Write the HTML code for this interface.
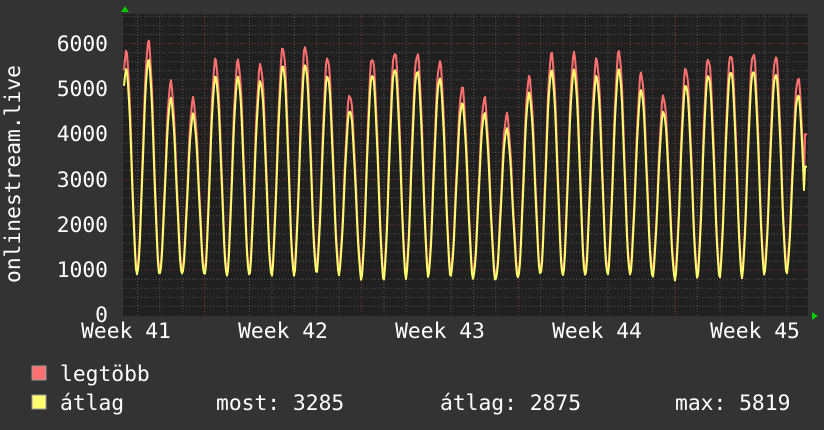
<!DOCTYPE html>
<html><head><meta charset="utf-8"><style>
html,body{margin:0;padding:0;background:#333;}
svg{display:block;}
text{font-family:"DejaVu Sans Mono","Liberation Mono",monospace;fill:#fff;font-size:21.3px;}
</style></head><body>
<svg id="s" width="824" height="430" xmlns="http://www.w3.org/2000/svg">
<rect width="824" height="430" fill="#333"/>
<rect x="123" y="14" width="685" height="302" fill="#202020"/>
<g id="grid"></g>
<path id="mx" fill="none" stroke="#ff7070" stroke-width="2" stroke-linejoin="round"/>
<path id="av" fill="none" stroke="#ffff70" stroke-width="2" stroke-linejoin="round"/>
<polygon points="121,12 125,6 129,12" fill="#0c0"/>
<polygon points="812,312 818,316 812,320" fill="#0c0"/>
<g text-anchor="end">
<text x="108" y="51">6000</text><text x="108" y="96">5000</text><text x="108" y="141">4000</text>
<text x="108" y="187">3000</text><text x="108" y="232">2000</text><text x="108" y="277">1000</text>
<text x="108" y="322">0</text></g>
<g text-anchor="middle">
<text x="126" y="338">Week 41</text><text x="283" y="338">Week 42</text><text x="440" y="338">Week 43</text>
<text x="597" y="338">Week 44</text><text x="755" y="338">Week 45</text></g>
<text transform="translate(20,174) rotate(-90)" text-anchor="middle">onlinestream.live</text>
<rect x="32" y="366" width="14" height="14" fill="#ff7070" stroke="#999" stroke-width="1"/>
<rect x="32" y="395" width="14" height="14" fill="#ffff70" stroke="#999" stroke-width="1"/>
<text x="60" y="381">legtöbb</text>
<text x="60" y="410">átlag</text>
<text x="216" y="410">most: 3285</text>
<text x="440" y="410">átlag: 2875</text>
<text x="675" y="410">max: 5819</text>
</svg>
<script>
var g=document.getElementById('grid'),h='';
function ln(x1,y1,x2,y2,c){h+='<line x1="'+x1+'" y1="'+y1+'" x2="'+x2+'" y2="'+y2+'" stroke="'+c+'" stroke-width="1" stroke-dasharray="1,2"/>';}
for(var v=200;v<=6600;v+=200){var y=315.5-v*0.04533;if(y<14)break;ln(123,y,808,y,v%1000==0?'#7a3a3a':'#555');}
for(var x=137.5;x<808;x+=22.4){ln(x,14,x,316,'#555');}
for(var x=204.5;x<808;x+=157){ln(x,14,x,316,'#7a3a3a');}
g.innerHTML=h;
var pk=[5800,6000,5100,4750,5650,5650,5550,5900,5900,5650,4850,5700,5850,5800,5600,5000,4750,4400,5250,5800,5800,5650,5800,5300,4800,5450,5700,5800,5800,5700,5200];
var mn=[1000,950,950,1000,950,1000,1000,950,1000,1050,950,850,950,950,1000,900,850,800,1000,1000,950,1000,950,1000,850,900,1000,950,1000,1050,1000];
function val(x,k){var p=(x-126)/22.4;var i=Math.round(p);var d=p-i;i=Math.max(0,Math.min(30,i));
var j=Math.max(0,Math.min(30,d<0?i-1:i+1));var m=(mn[i]+mn[j])/2;
var c=(1+Math.cos(2*Math.PI*d))/2;c=Math.pow(c,0.9);var n=Math.sin(x*1.7)*60+Math.sin(x*0.6)*40;
return (m*(k?1:0.9))+(pk[i]*(k?1:0.95)-m)*c+n*(k?1:0.6);}
var a='',b='';
for(var x=124;x<=807;x+=1){var y1=315.5-val(x,1)*0.04533,y2=315.5-val(x,0)*0.04533;
if(x>=805){y2=315.5-3285*0.04533;y1=315.5-4000*0.04533;}
a+=(x==124?'M':'L')+x+' '+y1.toFixed(1);b+=(x==124?'M':'L')+x+' '+y2.toFixed(1);}
document.getElementById('mx').setAttribute('d',a);document.getElementById('av').setAttribute('d',b);
</script>
</body></html>
